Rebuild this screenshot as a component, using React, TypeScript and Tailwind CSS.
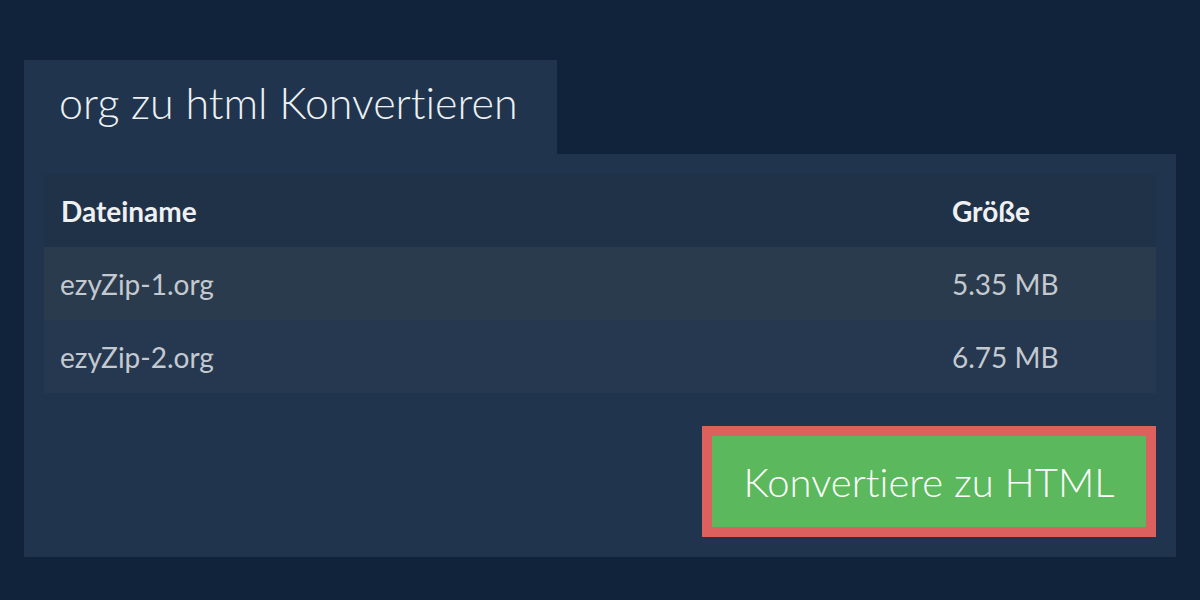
export default function App() {
  const files = [
    { name: 'ezyZip-1.org', size: '5.35 MB' },
    { name: 'ezyZip-2.org', size: '6.75 MB' },
  ];

  return (
    <div className="w-[1200px] h-[600px] bg-[#10233a] px-6 pt-[60px] font-['Lato','Liberation_Sans',sans-serif] [font-variant-ligatures:none]">
      <div className="flex">
        <div className="w-[533px] h-[94px] bg-[#20354d] pl-[35px] pt-[17px]">
          <h1 className="text-[43px] font-light leading-[52px] text-[#eef0f2]">org zu html Konvertieren</h1>
        </div>
      </div>

      <div className="w-[1152px] bg-[#20354d] px-5 pt-5 pb-5">
        <table className="w-full border-collapse text-[28px]">
          <thead>
            <tr className="h-[73px] bg-[#1f3248] text-left text-[#eef0f2]">
              <th className="pl-[17px] font-bold">Dateiname</th>
              <th className="w-[204px] font-bold">Größe</th>
            </tr>
          </thead>
          <tbody className="text-[#c4c9cf]">
            {files.map((file, index) => (
              <tr
                key={file.name}
                className={`h-[73px] ${index % 2 === 0 ? 'bg-[#2a3b4d]' : 'bg-[#253850]'}`}
              >
                <td className="pl-[16px]">{file.name}</td>
                <td>{file.size}</td>
              </tr>
            ))}
          </tbody>
        </table>

        <div className="flex justify-end pt-[33px]">
          <button
            type="button"
            className="h-[111px] w-[454px] border-[10px] border-[#dc605e] bg-[#5cb85c] text-[40px] font-light text-white"
          >
            Konvertiere zu HTML
          </button>
        </div>
      </div>
    </div>
  );
}
